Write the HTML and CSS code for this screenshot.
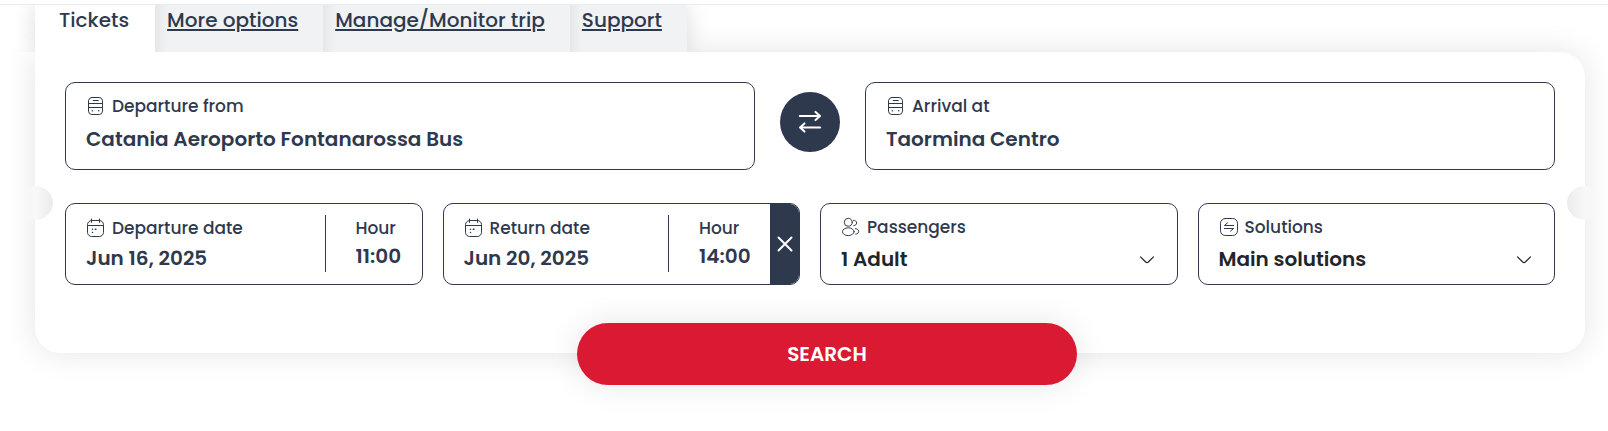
FILE: index.html
```html
<!DOCTYPE html>
<html lang="en">
<head>
<meta charset="utf-8">
<meta name="viewport" content="width=device-width, initial-scale=1">
<title>Tickets</title>
<link rel="stylesheet" href="styles.css">
</head>
<body>
<svg class="sprite" aria-hidden="true">
  <symbol id="bus" viewBox="0 0 20 20">
    <rect x="2.5" y="1.5" width="14" height="17" rx="3.4"/>
    <path d="M7.2 4.500h5M2.5 7.500h14M2.5 11.500h14"/>
    <path class="dots" d="M6.3 14.8h.01M12.8 14.8h.01"/>
  </symbol>
  <symbol id="calendar" viewBox="0 0 20 20">
    <rect x="1.500" y="2.500" width="16" height="16" rx="4.2"/>
    <path d="M1.500 7.500h16M5.500 1v3.4M13.500 1v3.4"/>
    <path class="dots" d="M6.5 11.3h.01M9.300 11.3h.6M6.5 14.4h.01"/>
  </symbol>
  <symbol id="people" viewBox="0 0 20 20">
    <circle cx="7.3" cy="5.3" r="4"/>
    <ellipse cx="7.3" cy="14.7" rx="5.8" ry="3.9"/>
    <path d="M12.4 3.3c2 0 3.2 1 3.2 2.6s-1 2.6-2.8 2.7M14.4 11.6c2 .2 3.3 1.2 3.3 2.7s-1.1 2.5-2.9 2.9"/>
  </symbol>
  <symbol id="solutions" viewBox="0 0 20 20">
    <rect x="1.5" y="1.5" width="17" height="17" rx="4.8"/>
    <path d="M14.6 8.5H5.400L8.600 5.800M5.400 11.500h9.200l-3.200 2.700"/>
  </symbol>
  <symbol id="chevron" viewBox="0 0 16 16">
    <path d="M1.5 4.8 6.7 10q1.3 1.2 2.6 0l5.2-5.2"/>
  </symbol>
</svg>

<header class="topline"></header>
<main class="booking">
  <nav class="tabs" aria-label="Booking sections">
    <a class="tab tab-active" href="#tickets" aria-current="page">Tickets</a>
    <a class="tab" href="#more">More options</a>
    <a class="tab" href="#trip">Manage/Monitor trip</a>
    <a class="tab" href="#support">Support</a>
  </nav>
  <form class="card" id="tickets">
    <span class="notch notch-left"></span>
    <span class="notch notch-right"></span>
    <div class="stations">
      <div class="field field-station">
        <label class="label" for="from"><svg class="icon"><use href="#bus"/></svg>Departure from</label>
        <input class="value" id="from" type="text" value="Catania Aeroporto Fontanarossa Bus">
      </div>
      <button class="swap" type="button" aria-label="Swap stations">
        <svg class="swap-icon" viewBox="0 0 24 24"><path d="M1.8 6h20M17.5 1.9 22 6l-4.5 4.1M22.2 17.5h-20M6.500 13.400 2 17.500l4.500 4.100"/></svg>
      </button>
      <div class="field field-station">
        <label class="label" for="to"><svg class="icon"><use href="#bus"/></svg>Arrival at</label>
        <input class="value" id="to" type="text" value="Taormina Centro">
      </div>
    </div>
    <div class="details">
      <div class="field field-date">
        <div class="date">
          <label class="label" for="out-date"><svg class="icon"><use href="#calendar"/></svg>Departure date</label>
          <input class="value" id="out-date" type="text" value="Jun 16, 2025">
        </div>
        <div class="hour">
          <label class="label" for="out-hour">Hour</label>
          <input class="value" id="out-hour" type="text" value="11:00">
        </div>
      </div>
      <div class="field field-date">
        <div class="date">
          <label class="label" for="back-date"><svg class="icon"><use href="#calendar"/></svg>Return date</label>
          <input class="value" id="back-date" type="text" value="Jun 20, 2025">
        </div>
        <div class="hour hour-wide">
          <label class="label" for="back-hour">Hour</label>
          <input class="value" id="back-hour" type="text" value="14:00">
        </div>
        <button class="clear" type="button" aria-label="Remove return">
          <svg class="clear-icon" viewBox="0 0 16 16"><path d="m1.5 1.5 13 13m0-13-13 13"/></svg>
        </button>
      </div>
      <div class="field field-select">
        <label class="label" for="passengers"><svg class="icon"><use href="#people"/></svg>Passengers</label>
        <select class="value" id="passengers"><option>1 Adult</option></select>
        <svg class="chevron"><use href="#chevron"/></svg>
      </div>
      <div class="field field-select">
        <label class="label" for="solutions-type"><svg class="icon"><use href="#solutions"/></svg>Solutions</label>
        <select class="value" id="solutions-type"><option>Main solutions</option></select>
        <svg class="chevron"><use href="#chevron"/></svg>
      </div>
    </div>
    <div class="actions">
      <button class="search" type="submit">SEARCH</button>
    </div>
  </form>
</main>
</body>
</html>
```
FILE: styles.css
```css
:root {
  --navy: #2f394e;
  --red: #da1933;
}

* {
  box-sizing: border-box;
}

body {
  margin: 0;
  background: #fff;
  color: var(--navy);
  font-family: Poppins, Inter, "Open Sans", sans-serif;
  font-size: 17px;
}

button,
input,
select {
  margin: 0;
  padding: 0;
  border: 0;
  font-family: inherit;
}

svg {
  fill: none;
  stroke: currentColor;
  stroke-width: 1;
  stroke-linecap: round;
  stroke-linejoin: round;
}

.sprite {
  position: absolute;
  width: 0;
  height: 0;
}

.dots {
  stroke-width: 1.5;
}

.topline {
  height: 5px;
  border-bottom: 1px solid #ececec;
}

.booking {
  padding: 0 23px 70px 35px;
  overflow: hidden;
}

.tabs {
  position: relative;
  z-index: 1;
  display: flex;
  width: fit-content;
  height: 47px;
  box-shadow: 0 0 25px rgba(0, 0, 0, 0.14);
  clip-path: inset(0 -35px);
}

.tab {
  padding: 0 25px 0 12px;
  background: linear-gradient(to right, #e6e7e9, #f1f2f4 12px);
  color: var(--navy);
  font-size: 20px;
  font-weight: 500;
  line-height: 30px;
  text-decoration: underline;
  text-decoration-thickness: 2px;
  text-underline-offset: 2px;
}

.tab-active {
  padding: 0 26px 0 24px;
  background: #fff;
  border-top-right-radius: 4px;
  text-decoration: none;
}

.card {
  position: relative;
  padding: 30px 30px 0;
  background: #fff;
  border-radius: 0 25px 25px 25px;
  box-shadow: 0 0 32px rgba(0, 0, 0, 0.11);
}

.notch {
  position: absolute;
  top: 134px;
  width: 36px;
  height: 34px;
  border-radius: 50%;
  background: linear-gradient(to right, rgba(255, 255, 255, 0), #f8f8f8 50%, #ebebeb);
}

.notch-left {
  left: -18px;
}

.notch-right {
  right: -18px;
  transform: scaleX(-1);
}

.stations {
  display: grid;
  grid-template-columns: 1fr 60px 1fr;
  align-items: start;
  gap: 25px;
}

.details {
  display: grid;
  grid-template-columns: repeat(4, 1fr);
  gap: 20px;
  margin-top: 33px;
}

.field {
  position: relative;
  min-width: 0;
  border: 1px solid var(--navy);
  border-radius: 10px;
  background: #fff;
}

.field-station {
  padding: 11px 20px 15px;
}

.field-station .value {
  margin-top: 6px;
}

.label {
  display: flex;
  align-items: center;
  gap: 6px;
  font-weight: 500;
  line-height: 24px;
}

.icon {
  flex: none;
  width: 20px;
  height: 20px;
}

.value {
  display: block;
  width: 100%;
  height: 30px;
  background: none;
  color: inherit;
  font-size: 20px;
  font-weight: 600;
  line-height: 30px;
}

.swap {
  display: grid;
  place-items: center;
  width: 60px;
  height: 60px;
  margin-top: 10px;
  border-radius: 50%;
  background: var(--navy);
  color: #fff;
}

.swap-icon {
  width: 24px;
  height: 24px;
  stroke-width: 2;
}

.field-date {
  display: flex;
  align-items: stretch;
  height: 82px;
  overflow: hidden;
}

.date {
  flex: 1;
  min-width: 0;
  padding: 12px 0 0 20px;
}

.date .value {
  margin-top: 3px;
}

.hour {
  flex: none;
  width: 97px;
  margin: 11px 0 12px;
  padding: 1px 0 0 30px;
  border-left: 1px solid var(--navy);
}

.hour .value {
  margin-top: 1px;
}

.hour-wide {
  width: 102px;
}

.clear {
  display: grid;
  place-items: center;
  width: 29px;
  background: var(--navy);
  color: #fff;
}

.clear-icon {
  width: 16px;
  height: 16px;
  stroke-width: 2;
}

.field-select {
  height: 82px;
  padding: 11px 20px 0;
}

.field-select .value {
  margin-top: 5px;
  appearance: none;
  color: #212529;
}

.chevron {
  position: absolute;
  right: 22px;
  bottom: 16px;
  width: 16px;
  height: 16px;
  color: #212529;
  stroke-width: 1.2;
  pointer-events: none;
}

.actions {
  display: flex;
  justify-content: center;
  margin-top: 38px;
  padding-left: 34px;
}

.search {
  position: relative;
  width: 500px;
  max-width: 100%;
  height: 62px;
  margin-bottom: -32px;
  border-radius: 31px;
  background: var(--red);
  box-shadow: 0 0 32px rgba(0, 0, 0, 0.1);
  color: #fff;
  font-size: 20px;
  font-weight: 600;
}
```
